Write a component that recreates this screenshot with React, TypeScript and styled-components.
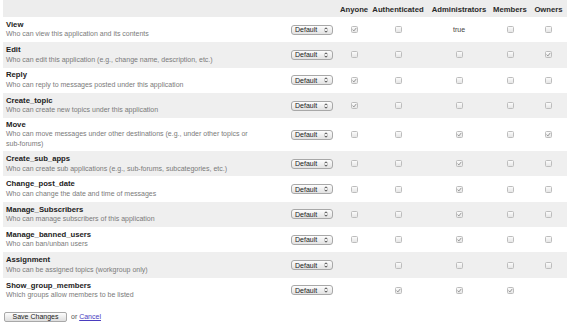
import React from "react";
import styled, { createGlobalStyle } from "styled-components";

const Global = createGlobalStyle`
  html, body { margin: 0; padding: 0; background: #fff; }
  body { font-family: "Liberation Sans", Arial, Helvetica, sans-serif; }
`;

const COLS = "285px 52px 28px 60px 62px 40px 37px";

const Page = styled.div`
  padding: 0 3px;
  width: 564px;
`;

const HeaderRow = styled.div`
  display: grid;
  grid-template-columns: ${COLS};
  height: 16px;
  padding-top: 1px;
  background: #ededed;
  align-items: center;
`;

const HeadCell = styled.div`
  display: flex;
  justify-content: center;
  white-space: nowrap;
  font-size: 7.7px;
  font-weight: bold;
  color: #2a2a2a;
`;

const Row = styled.div<{ $alt: boolean }>`
  display: grid;
  grid-template-columns: ${COLS};
  align-items: center;
  min-height: 25.3px;
  background: ${(p) => (p.$alt ? "#efefef" : "#fff")};
`;

const LabelCell = styled.div`
  padding: 1.75px 3px;
`;

const Title = styled.div`
  font-size: 7.7px;
  line-height: 9.5px;
  font-weight: bold;
  color: #222;
`;

const Desc = styled.div`
  font-size: 7px;
  line-height: 10px;
  color: #7a7a7a;
  max-width: 245px;
`;

const SelectCell = styled.div`
  padding-left: 3px;
  display: flex;
  align-items: center;
`;

const Select = styled.div`
  box-sizing: border-box;
  width: 42px;
  height: 10px;
  border: 1px solid #a8a8a8;
  border-radius: 3px;
  background: linear-gradient(#fdfdfd, #e2e2e2);
  display: flex;
  align-items: center;
  justify-content: space-between;
  padding: 0 4px 0 3px;
  font-size: 7px;
  color: #222;
`;

const Cell = styled.div`
  display: flex;
  justify-content: center;
  align-items: center;
`;

const BoolText = styled.span`
  font-size: 7px;
  color: #444;
`;

const Box = styled.span<{ $checked: boolean }>`
  box-sizing: border-box;
  width: 7px;
  height: 7px;
  border: 1px solid #bdbdbd;
  border-radius: 1.5px;
  background: linear-gradient(#fbfbfb, #e6e6e6);
  display: flex;
  align-items: center;
  justify-content: center;
`;

const Footer = styled.div`
  display: flex;
  align-items: center;
  gap: 4px;
  padding: 9px 1px 0;
  font-size: 7px;
  color: #555;
`;

const Button = styled.button`
  box-sizing: border-box;
  height: 10px;
  width: 63px;
  padding: 0;
  border: 1px solid #a8a8a8;
  border-radius: 2px;
  background: linear-gradient(#fdfdfd, #dedede);
  font-family: inherit;
  font-size: 7px;
  color: #222;
  line-height: 8px;
`;

const Link = styled.a`
  color: #4a3cbf;
  text-decoration: underline;
`;

const Arrows = () => (
  <svg width="4" height="6" viewBox="0 0 4 6">
    <polyline points="0.5,2.3 2,0.8 3.5,2.3" fill="none" stroke="#333" strokeWidth="0.9" />
    <polyline points="0.5,3.7 2,5.2 3.5,3.7" fill="none" stroke="#333" strokeWidth="0.9" />
  </svg>
);

const Check = ({ checked }: { checked: boolean }) => (
  <Box $checked={checked}>
    {checked && (
      <svg width="5" height="5" viewBox="0 0 5 5">
        <polyline points="0.6,2.6 1.9,3.9 4.4,0.8" fill="none" stroke="#8a8a8a" strokeWidth="0.9" />
      </svg>
    )}
  </Box>
);

type V = boolean | null | "true";

interface Perm {
  name: string;
  desc: string;
  vals: V[];
}

const perms: Perm[] = [
  { name: "View", desc: "Who can view this application and its contents", vals: [true, false, "true", false, false] },
  { name: "Edit", desc: "Who can edit this application (e.g., change name, description, etc.)", vals: [false, false, false, false, true] },
  { name: "Reply", desc: "Who can reply to messages posted under this application", vals: [true, false, false, false, false] },
  { name: "Create_topic", desc: "Who can create new topics under this application", vals: [true, false, false, false, false] },
  { name: "Move", desc: "Who can move messages under other destinations (e.g., under other topics or sub-forums)", vals: [false, false, true, false, true] },
  { name: "Create_sub_apps", desc: "Who can create sub applications (e.g., sub-forums, subcategories, etc.)", vals: [false, false, true, false, false] },
  { name: "Change_post_date", desc: "Who can change the date and time of messages", vals: [false, false, true, false, false] },
  { name: "Manage_Subscribers", desc: "Who can manage subscribers of this application", vals: [false, false, true, false, false] },
  { name: "Manage_banned_users", desc: "Who can ban/unban users", vals: [false, false, true, false, false] },
  { name: "Assignment", desc: "Who can be assigned topics (workgroup only)", vals: [null, false, false, false, false] },
  { name: "Show_group_members", desc: "Which groups allow members to be listed", vals: [null, true, true, true, null] },
];

const groups = ["Anyone", "Authenticated", "Administrators", "Members", "Owners"];

export default function App() {
  return (
    <Page>
      <Global />
      <HeaderRow>
        <div />
        <div />
        {groups.map((g) => (
          <HeadCell key={g}>{g}</HeadCell>
        ))}
      </HeaderRow>
      {perms.map((p, i) => (
        <Row key={p.name} $alt={i % 2 === 1}>
          <LabelCell>
            <Title>{p.name}</Title>
            <Desc>{p.desc}</Desc>
          </LabelCell>
          <SelectCell>
            <Select>
              <span>Default</span>
              <Arrows />
            </Select>
          </SelectCell>
          {p.vals.map((v, j) => (
            <Cell key={j}>
              {v === "true" ? <BoolText>true</BoolText> : v === null ? null : <Check checked={v} />}
            </Cell>
          ))}
        </Row>
      ))}
      <Footer>
        <Button>Save Changes</Button>
        <span>
          or <Link href="#">Cancel</Link>
        </span>
      </Footer>
    </Page>
  );
}
